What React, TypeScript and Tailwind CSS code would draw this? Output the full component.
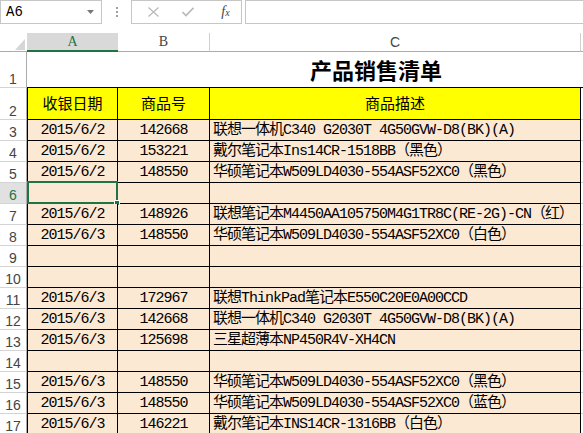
import React from 'react';

const CELL_FONT = "font-['Liberation_Mono','Noto_Sans_CJK_SC',monospace] text-[15px] tracking-[-1px] text-black";
const CJK_FONT = "font-['Noto_Sans_CJK_SC','Liberation_Sans',sans-serif]";

type Row = { n: number; date?: string; code?: string; desc?: string };

const ROWS: Row[] = [
    { n: 3, date: '2015/6/2', code: '142668', desc: '联想一体机C340 G2030T 4G50GVW-D8(BK)(A)' },
    { n: 4, date: '2015/6/2', code: '153221', desc: '戴尔笔记本Ins14CR-1518BB（黑色）' },
    { n: 5, date: '2015/6/2', code: '148550', desc: '华硕笔记本W509LD4030-554ASF52XC0（黑色）' },
    { n: 6 },
    { n: 7, date: '2015/6/2', code: '148926', desc: '联想笔记本M4450AA105750M4G1TR8C(RE-2G)-CN（红）' },
    { n: 8, date: '2015/6/3', code: '148550', desc: '华硕笔记本W509LD4030-554ASF52XC0（白色）' },
    { n: 9 },
    { n: 10 },
    { n: 11, date: '2015/6/3', code: '172967', desc: '联想ThinkPad笔记本E550C20E0A00CCD' },
    { n: 12, date: '2015/6/3', code: '142668', desc: '联想一体机C340 G2030T 4G50GVW-D8(BK)(A)' },
    { n: 13, date: '2015/6/3', code: '125698', desc: '三星超薄本NP450R4V-XH4CN' },
    { n: 14 },
    { n: 15, date: '2015/6/3', code: '148550', desc: '华硕笔记本W509LD4030-554ASF52XC0（黑色）' },
    { n: 16, date: '2015/6/3', code: '148550', desc: '华硕笔记本W509LD4030-554ASF52XC0（蓝色）' },
    { n: 17, date: '2015/6/3', code: '146221', desc: '戴尔笔记本INS14CR-1316BB（白色）' },
];

const RowHeader: React.FC<{ n: number; selected?: boolean }> = ({ n, selected = false }) => (
    <div
        className={`w-[27px] shrink-0 border-r border-b border-r-[#ababab] border-b-[#d4d4d4] flex items-end justify-center pb-[1px] text-[14px] font-['Liberation_Sans',sans-serif] leading-none ${
            selected ? 'bg-[#e1e1e1] text-[#217346]' : 'bg-white text-[#444]'
        }`}
    >
        {n}
    </div>
);

const DataRow: React.FC<{ row: Row; selected?: boolean }> = ({ row, selected = false }) => (
    <div className="flex h-[21px]">
        <RowHeader n={row.n} selected={selected} />
        <div className={`relative w-[91px] shrink-0 border-l border-r border-b border-black bg-[#fce9d3] flex items-end justify-center pb-[2px] leading-none ${CELL_FONT}`}>
            {row.date}
            {selected && (
                <div className="absolute -left-px -right-px -top-[2px] -bottom-px border-2 border-[#217346]">
                    <div className="absolute -right-[4px] -bottom-[4px] w-[6px] h-[6px] bg-[#217346] border border-white" />
                </div>
            )}
        </div>
        <div className={`w-[92px] shrink-0 border-r border-b border-black bg-[#fce9d3] flex items-end justify-center pb-[2px] leading-none ${CELL_FONT}`}>
            {row.code}
        </div>
        <div className={`w-[371px] shrink-0 border-r border-b border-black bg-[#fce9d3] flex items-end pl-[3px] pb-[2px] leading-none whitespace-pre overflow-hidden ${CELL_FONT}`}>
            {row.desc}
        </div>
        <div className="flex-1 border-b border-[#d4d4d4]" />
    </div>
);

const FormulaBar = () => (
    <div className="flex h-[24px]">
        <div className="w-[102px] shrink-0 border border-[#c6c6c6] flex items-center justify-between pl-[5px] pr-[7px]">
            <span className="font-['Liberation_Mono',monospace] text-[14px] text-black leading-none">A6</span>
            <svg width="7" height="4" viewBox="0 0 7 4"><polygon points="0,0 7,0 3.5,4" fill="#777" /></svg>
        </div>
        <div className="w-[29px] shrink-0 flex flex-col items-center justify-center gap-[2px] pl-[1px]">
            <span className="w-[2px] h-[2px] bg-[#a0a0a0]" />
            <span className="w-[2px] h-[2px] bg-[#a0a0a0]" />
            <span className="w-[2px] h-[2px] bg-[#a0a0a0]" />
        </div>
        <div className="w-[111px] shrink-0 border border-[#c6c6c6] flex items-center">
            <div className="w-[36px] flex justify-center pl-[6px]">
                <svg width="11" height="10" viewBox="0 0 11 10">
                    <path d="M0.5 0.5 L10.5 9.5 M10.5 0.5 L0.5 9.5" stroke="#b9b9b9" strokeWidth="1.2" />
                </svg>
            </div>
            <div className="w-[36px] flex justify-center pl-[4px]">
                <svg width="12" height="10" viewBox="0 0 12 10">
                    <path d="M0.5 5 L4 8.5 L11.5 0.8" stroke="#b9b9b9" strokeWidth="1.6" fill="none" />
                </svg>
            </div>
            <div className="flex-1 flex justify-center pl-[6px]">
                <span className="font-['Liberation_Serif',serif] italic text-[14px] text-[#444] leading-none">
                    f<span className="text-[10px]">x</span>
                </span>
            </div>
        </div>
        <div className="ml-[3px] flex-1 border border-r-0 border-[#c6c6c6]" />
    </div>
);

const ColumnHeaders = () => (
    <div className="flex h-[19px] mt-[9px]">
        <div className="w-[27px] shrink-0 border-b border-[#ababab] flex items-end justify-end pr-[2px] pb-[1px]">
            <svg width="10" height="11" viewBox="0 0 10 11"><polygon points="10,0 10,11 0,11" fill="#d6d6d6" /></svg>
        </div>
        <div className="w-[91px] shrink-0 bg-[#d9d9d9] border-b-2 border-[#217346] flex items-center justify-center font-['Liberation_Serif',serif] text-[14px] text-[#217346] leading-none">
            A
        </div>
        <div className="w-[92px] shrink-0 border-r border-b border-r-[#d0d0d0] border-b-[#ababab] flex items-center justify-center font-['Liberation_Serif',serif] text-[14px] text-[#444] leading-none">
            B
        </div>
        <div className="w-[371px] shrink-0 border-r border-b border-r-[#d0d0d0] border-b-[#ababab] flex items-center justify-center font-['Liberation_Sans',sans-serif] text-[14px] text-[#444] leading-none">
            C
        </div>
        <div className="flex-1 border-b border-[#ababab]" />
    </div>
);

export default function App() {
    return (
        <div className="w-[583px] h-[433px] overflow-hidden bg-white">
            <FormulaBar />
            <ColumnHeaders />

            {/* row 1: merged title */}
            <div className="flex h-[36px]">
                <RowHeader n={1} />
                <div className={`w-[698px] shrink-0 border-b border-black flex items-center justify-center text-[22px] font-bold text-black ${CJK_FONT}`}>
                    产品销售清单
                </div>
            </div>

            {/* row 2: headers */}
            <div className="flex h-[32px]">
                <RowHeader n={2} />
                <div className={`w-[91px] shrink-0 border-l border-r border-b border-black bg-[#ffff00] flex items-center justify-center text-[15px] text-black ${CJK_FONT}`}>收银日期</div>
                <div className={`w-[92px] shrink-0 border-r border-b border-black bg-[#ffff00] flex items-center justify-center text-[15px] text-black ${CJK_FONT}`}>商品号</div>
                <div className={`w-[371px] shrink-0 border-r border-b border-black bg-[#ffff00] flex items-center justify-center text-[15px] text-black ${CJK_FONT}`}>商品描述</div>
                <div className="flex-1 border-b border-[#d4d4d4]" />
            </div>

            {ROWS.map(row => (
                <DataRow key={row.n} row={row} selected={row.n === 6} />
            ))}
        </div>
    );
}
